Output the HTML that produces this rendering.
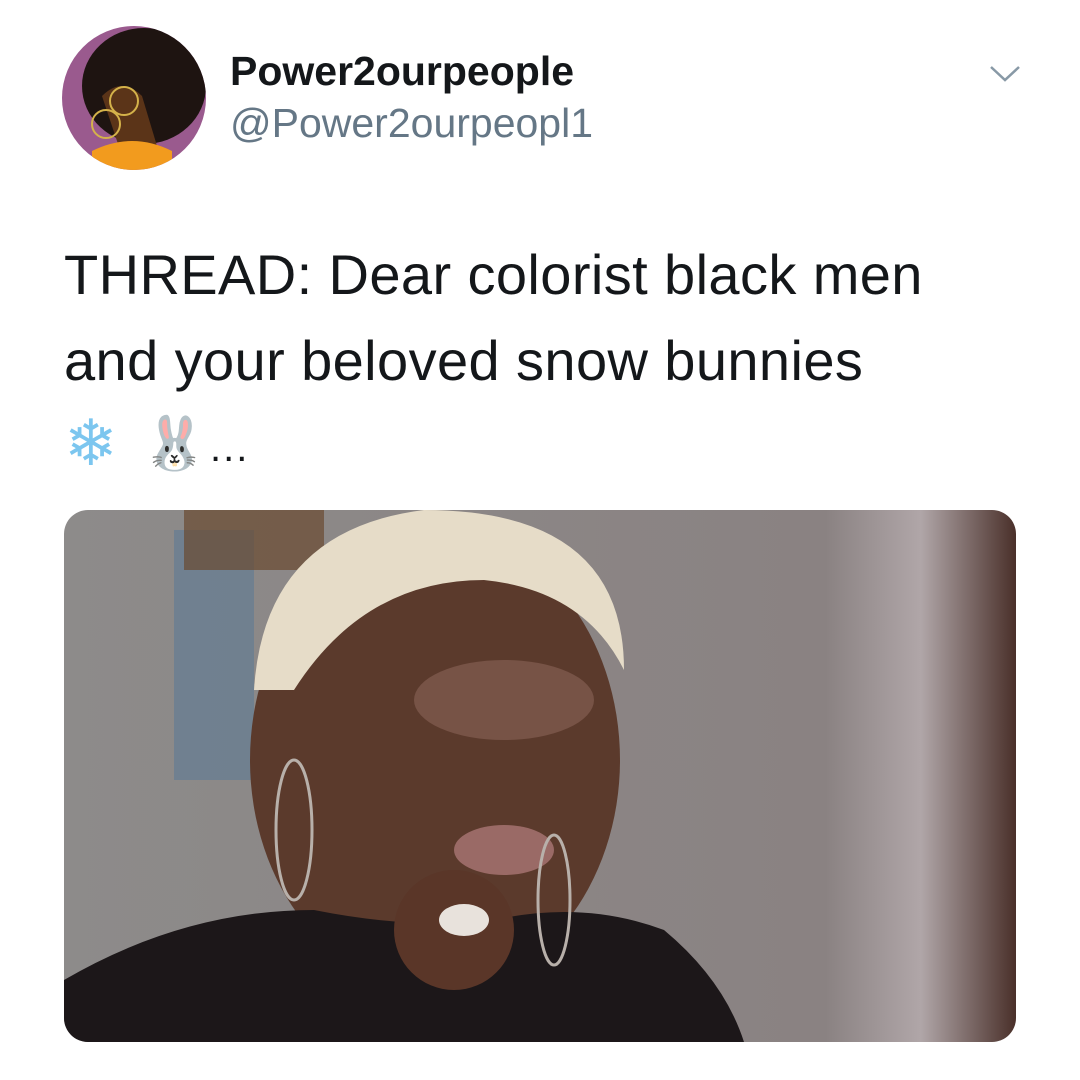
<!DOCTYPE html>
<html><head><meta charset="utf-8"><style>
html,body{margin:0;padding:0;background:#fff;width:1080px;height:1080px;overflow:hidden;font-family:"Liberation Sans",sans-serif}
.abs{position:absolute}
</style></head><body>
<div class="abs" style="left:0;top:0;width:1080px;height:1080px;background:#fff"></div>
<svg class="abs" style="left:62px;top:26px" width="144" height="144" viewBox="0 0 144 144">
<defs><clipPath id="c"><circle cx="72" cy="72" r="72"/></clipPath></defs>
<g clip-path="url(#c)">
<rect width="144" height="144" fill="#9a5a8e"/>
<ellipse cx="82" cy="60" rx="62" ry="58" fill="#1e1411"/>
<path d="M40 70 Q60 50 80 70 L95 120 L60 130 Z" fill="#5b3418"/>
<path d="M30 125 Q70 105 110 125 L110 150 L30 150 Z" fill="#f29b1e"/>
<circle cx="62" cy="75" r="14" fill="none" stroke="#d4b24a" stroke-width="2"/>
<circle cx="44" cy="98" r="14" fill="none" stroke="#d4b24a" stroke-width="2"/>
</g></svg>
<div class="abs" style="left:230px;top:48px;font-size:41px;font-weight:bold;color:#14171a">Power2ourpeople</div>
<div class="abs" style="left:230px;top:100px;font-size:41px;color:#657786">@Power2ourpeopl1</div>
<svg class="abs" style="left:988px;top:64px" width="34" height="20" viewBox="0 0 34 20"><path d="M3 3 L17 16 L31 3" fill="none" stroke="#8899a6" stroke-width="2.5"/></svg>
<div class="abs" style="left:64px;top:232px;font-size:56px;line-height:86px;color:#14171a;letter-spacing:0.4px">THREAD: Dear colorist black men<br>and your beloved snow bunnies</div>
<div class="abs" style="left:64px;top:408px;font-size:64px;line-height:72px;color:#7cc6ef;font-family:'DejaVu Sans',sans-serif">❄</div>
<div class="abs" style="left:142px;top:408px;font-size:52px;line-height:72px;color:#9d8f96;font-family:'DejaVu Sans',sans-serif">🐰</div>
<div class="abs" style="left:210px;top:428px;font-size:40px;line-height:40px;color:#14171a;letter-spacing:2px">...</div>
<svg class="abs" style="left:64px;top:510px" width="952" height="532" viewBox="0 0 952 532">
<defs><clipPath id="r"><rect width="952" height="532" rx="24"/></clipPath>
<linearGradient id="bg" x1="0" x2="1"><stop offset="0" stop-color="#8d8b8a"/><stop offset="0.8" stop-color="#8a8282"/><stop offset="0.9" stop-color="#b0a6a8"/><stop offset="1" stop-color="#4a302a"/></linearGradient></defs>
<g clip-path="url(#r)">
<rect width="952" height="532" fill="url(#bg)"/>
<rect x="110" y="20" width="80" height="250" fill="#5e7a94" opacity="0.6"/>
<rect x="120" y="0" width="140" height="60" fill="#6a4a30" opacity="0.7"/>
<ellipse cx="371" cy="250" rx="185" ry="230" fill="#5b3a2c"/>
<path d="M190 180 Q200 20 360 0 Q560 0 560 160 Q520 80 420 70 Q300 70 230 180 Z" fill="#e6dcc8"/>
<ellipse cx="440" cy="190" rx="90" ry="40" fill="#8a6458" opacity="0.6"/>
<ellipse cx="440" cy="340" rx="50" ry="25" fill="#9a6a66"/>
<path d="M0 470 Q120 400 250 400 Q350 420 430 410 Q520 390 600 420 Q660 470 680 532 L0 532 Z" fill="#1c1719"/>
<ellipse cx="390" cy="420" rx="60" ry="60" fill="#5a3628"/>
<ellipse cx="400" cy="410" rx="25" ry="16" fill="#e8e2dc"/>
<ellipse cx="230" cy="320" rx="18" ry="70" fill="none" stroke="#b8b0aa" stroke-width="3"/>
<ellipse cx="490" cy="390" rx="16" ry="65" fill="none" stroke="#b8b0aa" stroke-width="3"/>
</g></svg>
</body></html>
